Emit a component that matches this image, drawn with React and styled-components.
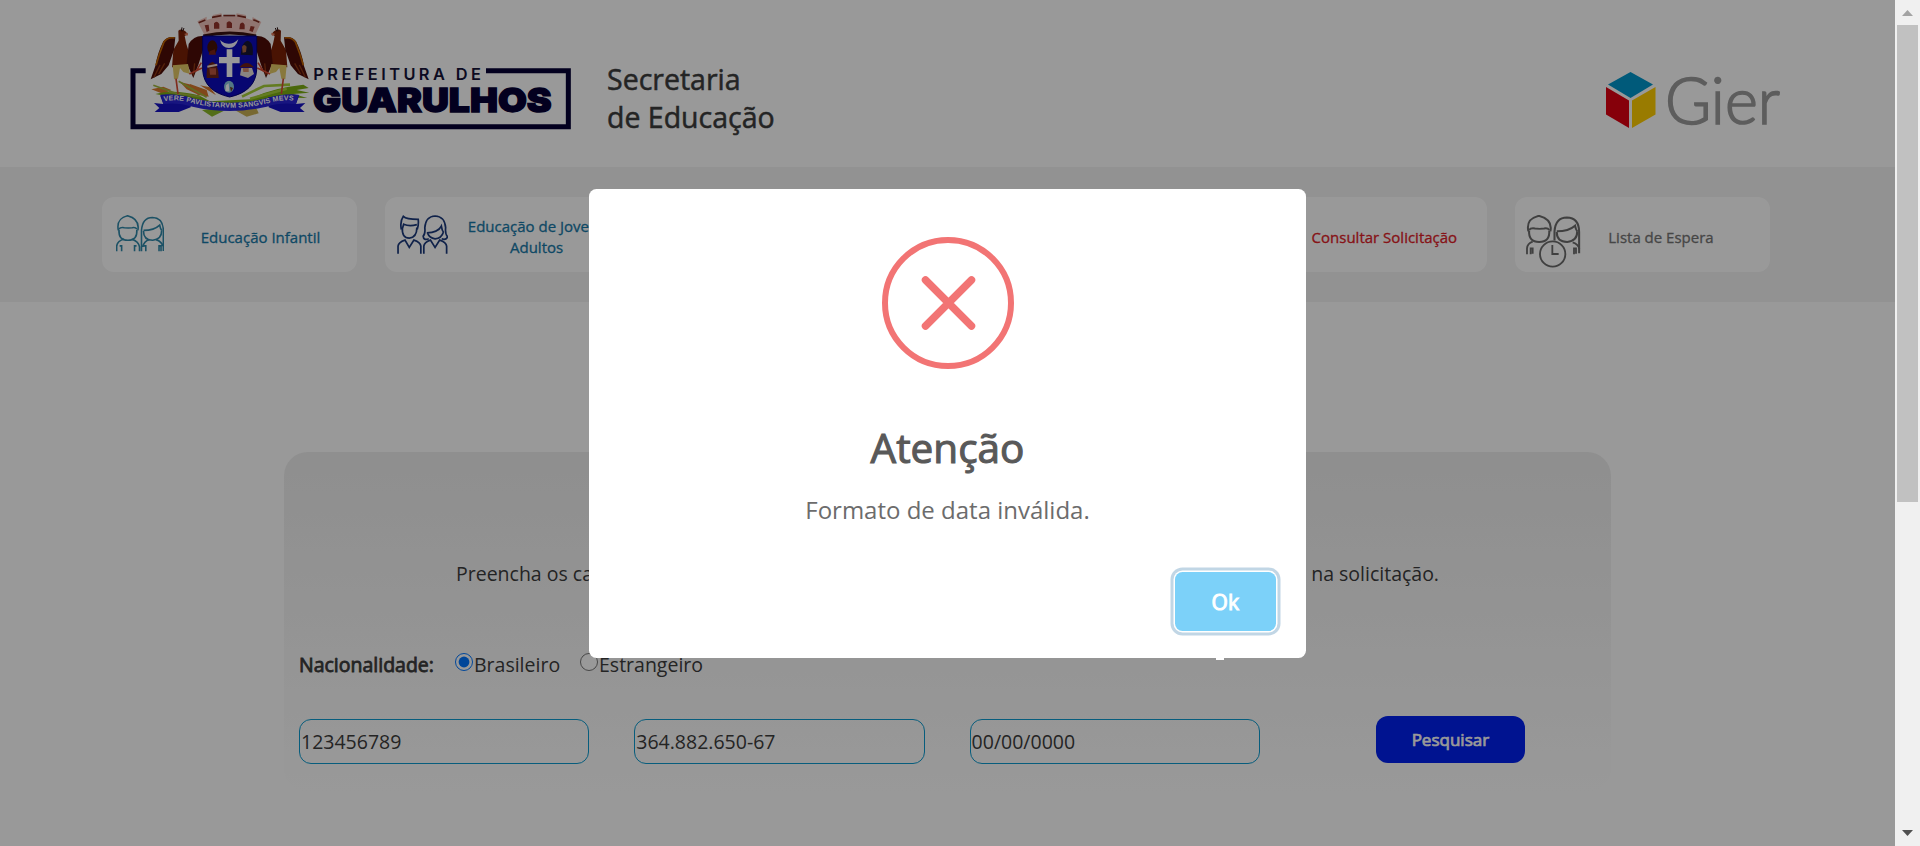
import React from "react";
import styled, { createGlobalStyle } from "styled-components";

const GlobalStyle = createGlobalStyle`
  * { box-sizing: border-box; }
  body { margin: 0; overflow: hidden; background: #fff; }
  body, input, button { font-family: "Open Sans", "Noto Sans", sans-serif; }
`;

const Screen = styled.div`
  display: flex;
  width: 1920px;
  height: 846px;
  overflow: hidden;
`;
const Page = styled.div`
  position: relative;
  width: 1895px;
  height: 846px;
  overflow: hidden;
  color: #3c3c3c;
`;
const Header = styled.header`
  display: flex;
  height: 167px;
  padding: 10px 113px 0 130px;
`;
const Department = styled.h1`
  margin: 50px auto 0 33px;
  font-size: 28.5px;
  line-height: 38px;
  font-weight: 400;
  -webkit-text-stroke: 0.5px #3c3c3c;
`;
const GierSlot = styled.div`
  padding-top: 44px;
`;
const Nav = styled.nav`
  display: flex;
  gap: 27.6px;
  height: 135px;
  padding: 30px 0 0 102px;
  background: #f3f3f3;
`;
const NavCard = styled.a`
  display: flex;
  align-items: flex-start;
  flex: 0 0 255px;
  height: 75px;
  padding: 18px 0 0 ${(p) => p.$inset || 0}px;
  border-radius: 12px;
  background: #fff;
`;
const NavLabel = styled.span`
  display: flex;
  align-items: center;
  justify-content: center;
  width: ${(p) => p.$width}px;
  height: ${(p) => p.$height || 45}px;
  margin-left: ${(p) => p.$gap}px;
  text-align: center;
  font-size: 15px;
  line-height: 21px;
  color: ${(p) => p.$color};
  -webkit-text-stroke: 0.3px ${(p) => p.$color};
`;
const FormPanel = styled.section`
  width: 1327px;
  height: 340px;
  margin: 150px 0 0 284px;
  padding: 107px 15px 0;
  border-radius: 24px;
  background: linear-gradient(#eee, #fff);
`;
const Intro = styled.p`
  display: flex;
  justify-content: space-between;
  width: 983px;
  margin: 0 auto;
  font-size: 19.5px;
  line-height: 30px;
  white-space: nowrap;
`;
const Nationality = styled.div`
  display: flex;
  align-items: center;
  height: 30px;
  margin-top: 60px;
  font-size: 19.5px;
`;
const FieldName = styled.span`
  width: 156px;
  -webkit-text-stroke: 0.8px #3c3c3c;
`;
const RadioLabel = styled.label`
  display: flex;
  align-items: center;
  width: 125px;
`;
const Radio = styled.input`
  flex: none;
  width: 18px;
  height: 18px;
  margin: 0 1px 4px 0;
`;
const Fields = styled.div`
  display: flex;
  align-items: flex-start;
  gap: 45px;
  margin-top: 37px;
`;
const Field = styled.input`
  width: 290.3px;
  height: 45px;
  margin-top: 3px;
  padding: 0 1px;
  border: 1px solid #0c9bd0;
  border-radius: 12px;
  background: transparent;
  font-size: 19.5px;
  color: #3c3c3c;
`;
const SearchButton = styled.button`
  width: 149px;
  height: 47px;
  margin-left: 71px;
  border: 0;
  border-radius: 12px;
  background: #0020f0;
  color: #fff;
  font-size: 17px;
  -webkit-text-stroke: 0.7px #fff;
`;

const Overlay = styled.div`
  position: absolute;
  inset: 0;
  padding: 189px 0 0 589px;
  background: rgba(0, 0, 0, 0.4);
`;
const Modal = styled.div`
  position: relative;
  display: flex;
  flex-direction: column;
  align-items: center;
  width: 717px;
  height: 468.5px;
  padding: 48px 30.5px 0;
  border-radius: 7.5px;
  background: #fff;
`;
const CaretMark = styled.i`
  position: absolute;
  left: 627px;
  bottom: -2.5px;
  width: 8px;
  height: 4px;
  background: #fff;
`;
const ModalTitle = styled.h2`
  margin: 48.5px 0 0;
  font-size: 40.5px;
  line-height: 60px;
  font-weight: 400;
  color: #595959;
  -webkit-text-stroke: 1.1px #595959;
`;
const ModalText = styled.p`
  margin: 14px 0 0;
  font-size: 24px;
  line-height: 36px;
  color: #6c6c6c;
`;
const OkButton = styled.button`
  align-self: flex-end;
  width: 100.5px;
  height: 59px;
  margin-top: 44.5px;
  border: 0;
  border-radius: 7.5px;
  background: #7cd1f9;
  box-shadow: 0 0 0 1.5px #fff, 0 0 0 4.5px rgba(43, 114, 165, 0.29);
  color: #fff;
  font-size: 21px;
  -webkit-text-stroke: 1px #fff;
`;

const Scrollbar = styled.div`
  display: flex;
  flex-direction: column;
  align-items: center;
  width: 25px;
  height: 846px;
  padding: 10px 0;
  background: #f0f0f0;
`;
const Thumb = styled.div`
  width: 21px;
  height: 477px;
  margin: 9px 0 auto;
  background: #c1c1c1;
`;

function Bird() {
  return (
    <g>
      <path d="M205 92 Q214 84 226 94 L234 103 L224 108 L229 132 L238 160 L236 198 L186 202 L190 150 L206 122 Z" fill="#7a2105" />
      <path d="M196 112 Q172 108 160 124 Q142 160 136 198 L122 238 L154 222 L176 196 L192 150 Z" fill="#4d0d08" />
      <path d="M194 114 Q174 110 162 126 Q148 160 138 196" fill="none" stroke="#c26400" strokeWidth="5" />
      <path d="M279 108 Q252 106 236 132 L230 190 L250 234 L266 192 L279 150 Z" fill="#4d0d08" />
      <path d="M150 195 L132 232 M164 190 L146 222 M254 190 L250 226" stroke="#8e3712" strokeWidth="4" />
      <path d="M216 82 L214 94 M222 84 L218 94" stroke="#2b1210" strokeWidth="3" />
      <path d="M234 98 L232 108 L222 102 Z" fill="#e98060" />
      <path d="M188 196 L234 192 L240 222 L220 216 L210 204 L204 236 L192 238 Z" fill="#e3c966" />
      <path d="M198 236 L204 282 M238 222 L276 204 M258 214 L274 188" fill="none" stroke="#d44a32" strokeWidth="5" />
    </g>
  );
}

function CityLogo() {
  return (
    <svg width="444" height="124" viewBox="60 30 1332 372">
      <path d="M107 212 H69 V380 H1375 V212 H1128" fill="none" stroke="#050035" strokeWidth="15" />
      <path d="M284 106 L262 64 L290 50 L290 60 L310 54 L308 45 L334 40 L338 50 L376 50 L380 40 L408 45 L406 54 L426 60 L428 51 L454 66 L434 108 Q360 88 284 106 Z" fill="#f0c4bc" />
      <path d="M266 68 L286 60 M306 52 L334 47 M340 47 H376 M382 47 L408 52 M430 59 L448 67" stroke="#7e2a20" strokeWidth="5" />
      <path d="M312 70 Q320 60 328 72 V86 H312 Z M350 68 Q358 58 366 70 V84 H350 Z M390 72 Q398 62 404 74 V88 H388 Z M284 76 L296 74 L298 92 L290 96 Z M422 78 L434 80 L428 96 L418 92 Z" fill="#94332a" />
      <path d="M280 108 Q360 90 438 108" fill="none" stroke="#3a1210" strokeWidth="9" />
      <path d="M124 268 L160 260 L184 270 L160 282 Z M210 246 L250 256 L268 286 L230 268 Z M240 252 L290 270 L296 290 L262 284 Z M270 256 L300 262 L318 286 Z" fill="#d8792e" />
      <path d="M136 282 Q190 266 266 286 L300 304 L420 298 Q480 264 580 254 L596 264 L560 270 L598 278 L550 282 L592 294 L480 292 L400 320 L300 320 L180 290 Z" fill="#7cad13" />
      <path d="M396 290 L462 258 L540 254 M420 296 L530 266" fill="none" stroke="#a6cf38" strokeWidth="8" />
      <path d="M206 244 L290 292 M176 276 L270 290 M130 256 L210 284" stroke="#9fb53c" strokeWidth="5" />
      <Bird />
      <g transform="translate(718 0) scale(-1 1)"><Bird /></g>
      <path d="M278 108 H440 V210 Q436 274 359 291 Q282 274 278 210 Z" fill="#0d0bbd" stroke="#00007c" strokeWidth="3" />
      <path d="M330 120 Q358 144 385 118 Q378 144 357 144 Q336 144 330 120 Z" fill="#f2f2ff" />
      <path d="M350 148 H367 V171 H389 V190 H367 V231 H350 V190 H327 V171 H350 Z" fill="#fff" />
      <ellipse cx="307" cy="142" rx="15" ry="21" fill="#461108" />
      <path d="M299 154 L314 148 L318 164 H296 Z" fill="#7c2318" />
      <path d="M392 164 Q396 124 412 122 Q432 124 428 166 Z" fill="#161433" />
      <path d="M396 140 Q402 130 410 140 L408 156 L398 158 Z" fill="#a46342" />
      <path d="M290 234 Q288 188 308 186 Q326 192 326 234 Z" fill="#6c2319" />
      <path d="M292 200 L322 194" stroke="#f0d9d0" strokeWidth="6" />
      <path d="M298 205 H318 V224 H300 Z" fill="#ba563e" />
      <path d="M388 202 Q410 176 432 202 Z" fill="#702118" />
      <path d="M394 204 H426 L432 222 L414 234 L390 226 Z" fill="#e5ded9" />
      <path d="M398 204 H416 V216 H400 Z" fill="#d28a6a" />
      <ellipse cx="357" cy="260" rx="15" ry="18" fill="#8cc7dc" />
      <path d="M348 256 L356 250 L358 274 L346 274 Z" fill="#fff" />
      <path d="M360 260 L369 264 L363 276 Z" fill="#6d3a1c" />
      <path d="M276 330 L304 326 L342 332 L306 350 Z" fill="#8bb82b" />
      <path d="M374 330 L440 326 L446 340 L410 350 Z" fill="#c9b054" />
      <path d="M132 309 L160 312 L150 286 L244 292 L242 322 L206 336 H134 L148 324 Z" fill="#1612c4" />
      <path d="M586 309 L558 312 L568 286 L474 292 L476 322 L512 336 H584 L570 324 Z" fill="#1612c4" />
      <path d="M152 284 Q200 280 246 294 Q360 322 472 294 Q520 280 566 284 L558 312 Q510 306 470 320 Q360 346 248 320 Q204 306 160 312 Z" fill="#2824d6" />
      <path id="motto" d="M162 304 Q206 296 248 310 Q360 336 472 310 Q516 296 560 304" fill="none" />
      <text fill="#fff" fontFamily="Liberation Sans, sans-serif" fontWeight="700" fontSize="21">
        <textPath href="#motto" textLength="392">VERE PAVLISTARVM SANGVIS MEVS</textPath>
      </text>
      <text x="610" y="241" fill="#151337" fontFamily="Inter, sans-serif" fontWeight="600" fontSize="49" textLength="503">PREFEITURA DE</text>
      <text x="609" y="336" fill="#050035" stroke="#050035" strokeWidth="4" fontFamily="Inter, sans-serif" fontWeight="900" fontSize="100" textLength="716" lengthAdjust="spacingAndGlyphs">GUARULHOS</text>
    </svg>
  );
}

function GierLogo() {
  return (
    <svg width="178" height="94" viewBox="0 -14 178 94">
      <path d="M26.500 4 L49 16.500 L26.500 30 L4 16.500 Z" fill="#0096cb" />
      <path d="M2 19 L25 32.500 V60 L2 46.500 Z" fill="#e00012" />
      <path d="M51.500 19 L28 32.500 V60 L51.500 46.500 Z" fill="#ffcd00" />
      <text x="61" y="56" fill="#9b9b9b" stroke="#9b9b9b" strokeWidth="1.700" fontFamily="Lato, sans-serif" fontWeight="300" fontSize="66" textLength="115" lengthAdjust="spacingAndGlyphs">Gier</text>
    </svg>
  );
}

function ChildrenHeads() {
  return (
    <g>
      <path d="M84 150 C79 124 89 112 112 106 C135 112 148 124 143 150" />
      <path d="M86 148 Q84 180 113 180 Q142 180 140 148" />
      <path d="M86 146 Q90 140 102 142 L114 143 L126 142 Q136 140 140 146" />
      <path d="M154 176 V150 Q157 111 187 111 Q220 112 220 152 V212" />
      <path d="M160 152 Q160 180 188 180 Q215 178 215 150" />
      <path d="M160 150 Q192 150 209 134 Q211 145 215 150" />
    </g>
  );
}

function ChildrenIcon({ color }) {
  return (
    <svg width="48" height="37" viewBox="77 104 145 111" fill="none" stroke={color} strokeWidth="4.800">
      <ChildrenHeads />
      <path d="M79 213 V198 Q80 182 102 176 M124 176 Q146 184 148 200 V213 M94 213 V197 H88 M133 213 V197 H139 M154 176 V213 M158 200 Q161 184 178 178 M198 178 Q216 184 218 198 M167 213 V197 H160 M207 213 V197 H213 V213" />
    </svg>
  );
}

function AdultsIcon({ color }) {
  return (
    <svg width="51" height="39" viewBox="920 104 154 118" fill="none" stroke={color} strokeWidth="5.200">
      <path d="M933 148 Q928 124 939 108 Q948 117 984 117 Q986 132 981 148" />
      <path d="M936 146 L940 132 Q958 140 980 133 M936 142 Q934 174 957 174 Q980 172 980 142" />
      <path d="M923 221 V198 Q924 187 944 180 L957 202 L971 180 Q991 187 992 198 V221" />
      <path d="M1016 176 Q1000 182 999 168 Q1006 162 1004 142 Q1007 108 1035 107 Q1064 108 1067 142 Q1065 163 1073 170 Q1068 181 1055 176" />
      <path d="M1010 158 Q1044 158 1054 138 Q1056 152 1061 157 M1012 158 Q1018 174 1035 176 Q1055 174 1060 156" />
      <path d="M1001 221 V198 Q1002 187 1021 180 L1035 202 L1049 180 Q1069 187 1070 198 V221" />
    </svg>
  );
}

function WaitingIcon({ color }) {
  return (
    <svg width="55" height="53" viewBox="0 0 165 159" fill="none" stroke={color} strokeWidth="5.500">
      <g transform="translate(-87 -110) scale(1.12 1.06)"><ChildrenHeads /></g>
      <path d="M3 118 V100 Q4 86 20 80 M14 118 V100 H20 V116 M144 118 V100 H150 V116 M140 82 Q158 88 160 102" />
      <circle cx="80" cy="117" r="38" />
      <path d="M79 90 V117 H98" />
    </svg>
  );
}

function ErrorIcon() {
  return (
    <svg width="132" height="132" viewBox="0 0 132 132" fill="none" stroke="#f27474">
      <circle cx="66" cy="66" r="63" strokeWidth="6" />
      <path d="M43.500 43 L89.500 89 M89.500 43 L43.500 89" strokeWidth="7.500" strokeLinecap="round" />
    </svg>
  );
}

export default function App() {
  return (
    <Screen>
      <GlobalStyle />
      <Page>
        <Header>
          <CityLogo />
          <Department>Secretaria<br />de Educação</Department>
          <GierSlot><GierLogo /></GierSlot>
        </Header>
        <Nav>
          <NavCard $inset={14}>
            <ChildrenIcon color="#2f87a8" />
            <NavLabel $gap={0} $width={193} $color="#1879a8">Educação Infantil</NavLabel>
          </NavCard>
          <NavCard $inset={12}>
            <AdultsIcon color="#1c3a7c" />
            <NavLabel $gap={9} $width={160} $height={43} $color="#1879a8">Educação de Jovens<br />Adultos</NavLabel>
          </NavCard>
          <NavCard />
          <NavCard />
          <NavCard $inset={60}>
            <NavLabel $gap={0} $width={184} $color="#df2128">Consultar Solicitação</NavLabel>
          </NavCard>
          <NavCard $inset={11}>
            <WaitingIcon color="#6c6c6c" />
            <NavLabel $gap={0} $width={160} $color="#757575">Lista de Espera</NavLabel>
          </NavCard>
        </Nav>
        <FormPanel>
          <Intro><span>Preencha os campos</span><span>na solicitação.</span></Intro>
          <Nationality>
            <FieldName>Nacionalidade:</FieldName>
            <RadioLabel><Radio type="radio" name="nationality" defaultChecked />Brasileiro</RadioLabel>
            <RadioLabel><Radio type="radio" name="nationality" />Estrangeiro</RadioLabel>
          </Nationality>
          <Fields>
            <Field defaultValue="123456789" />
            <Field defaultValue="364.882.650-67" />
            <Field defaultValue="00/00/0000" />
            <SearchButton>Pesquisar</SearchButton>
          </Fields>
        </FormPanel>
        <Overlay>
          <Modal>
            <ErrorIcon />
            <ModalTitle>Atenção</ModalTitle>
            <ModalText>Formato de data inválida.</ModalText>
            <OkButton>Ok</OkButton>
            <CaretMark />
          </Modal>
        </Overlay>
      </Page>
      <Scrollbar>
        <svg width="11" height="6"><path d="M5.500 0 L11 6 H0 Z" fill="#a3a3a3" /></svg>
        <Thumb />
        <svg width="11" height="6"><path d="M0 0 H11 L5.500 6 Z" fill="#505050" /></svg>
      </Scrollbar>
    </Screen>
  );
}
